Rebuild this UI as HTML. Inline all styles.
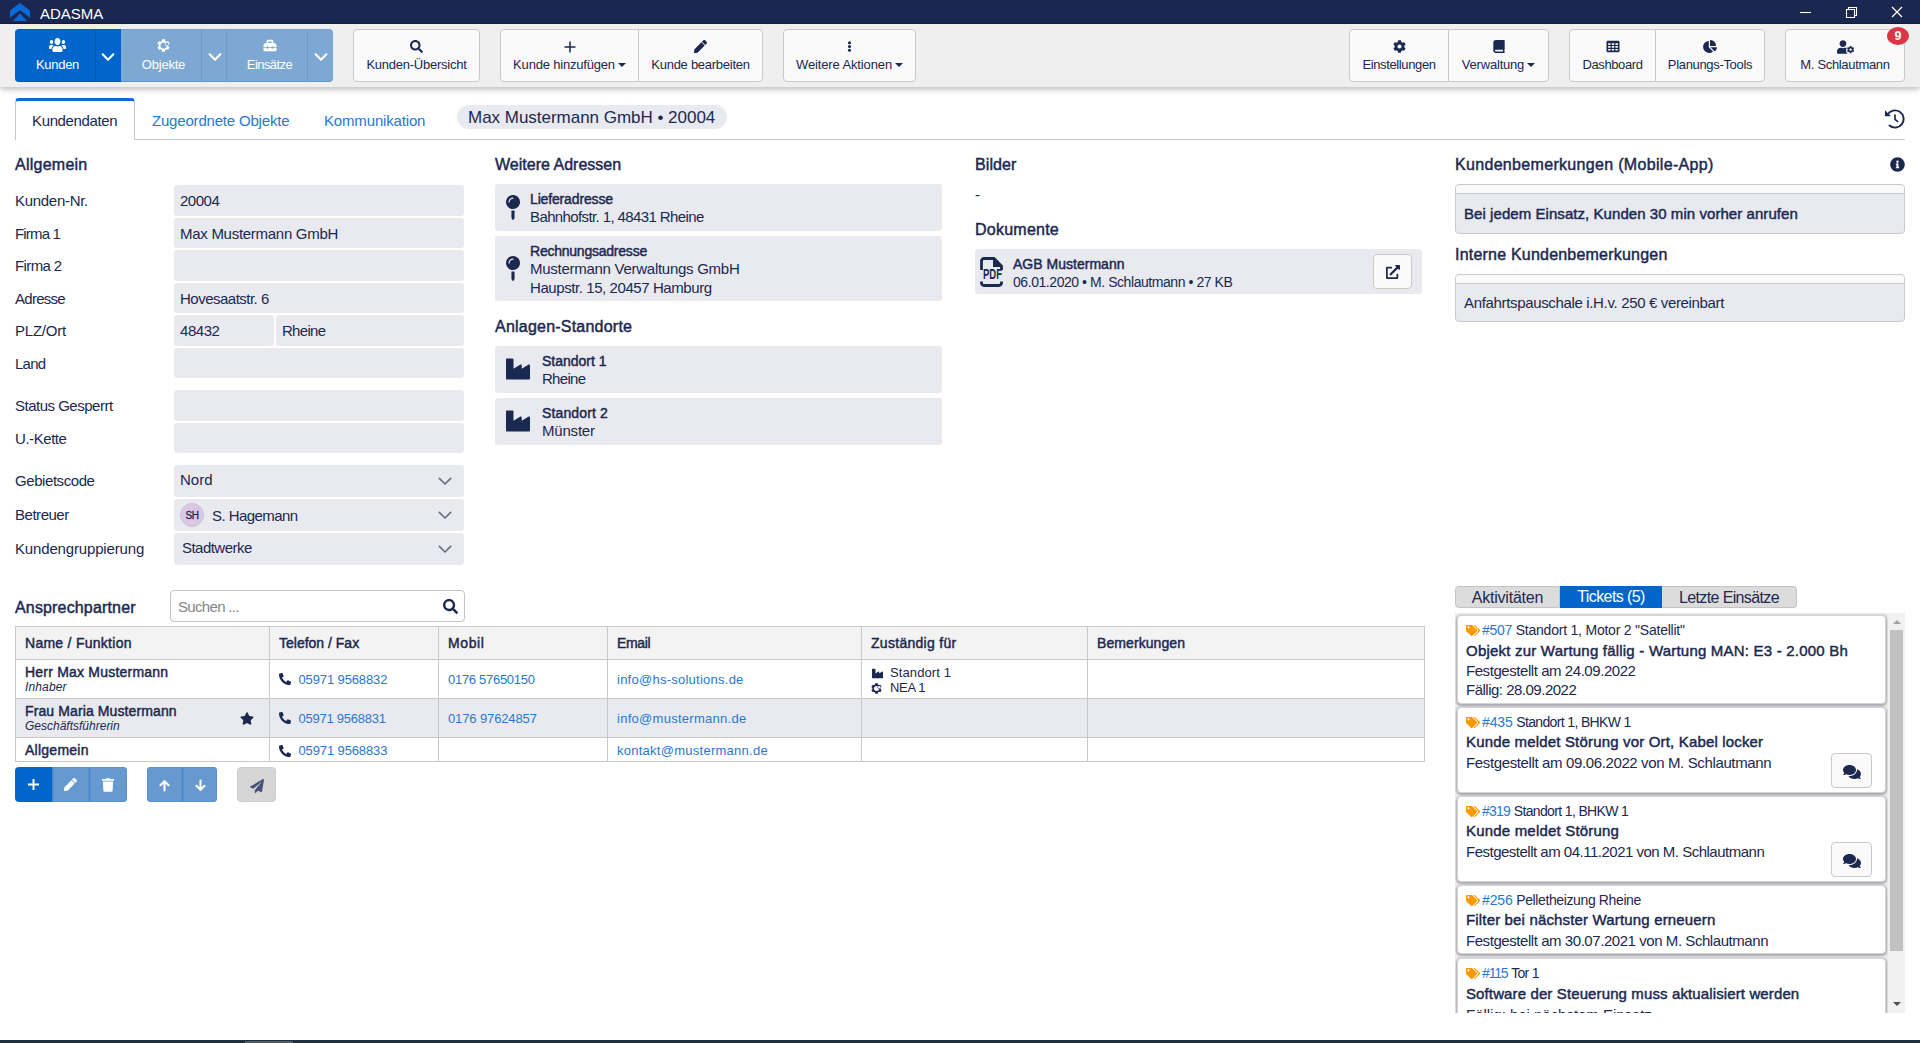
<!DOCTYPE html>
<html lang="de"><head>
<meta charset="utf-8">
<title>ADASMA</title>
<style>
*{box-sizing:border-box;margin:0;padding:0}
html,body{width:1921px;height:1043px;overflow:hidden;background:#fff}
body{position:relative;font-family:"Liberation Sans",sans-serif;font-size:15px;color:#1b2850;letter-spacing:-0.3px}
.abs{position:absolute}
svg{display:block;fill:currentColor}
.nw{white-space:nowrap}
.b{font-weight:normal;-webkit-text-stroke:0.45px currentColor}
a{color:#2878d0;text-decoration:none}
/* title bar */
#title{left:0;top:0;width:1920px;height:24px;background:#1a2750;border-bottom:1px solid #111c3e}
#title .name{left:40px;top:5px;color:#fff;font-size:15px;letter-spacing:-0.2px}
/* toolbar */
#bar{left:0;top:24px;width:1920px;height:63px;background:#efefef;box-shadow:0 2px 6px rgba(0,0,0,.28)}
.tb{position:absolute;top:5px;height:53px;background:#fafafa;border:1px solid #c9c9c9;color:#1b2850;font-size:13px;text-align:center}
.tb .ic{position:absolute;left:0;right:0;top:9.5px;height:16px}
.tb .ic svg{margin:0 auto}
.tb .lb{position:absolute;left:0;right:0;top:27px;white-space:nowrap}
.nb{position:absolute;top:5px;height:53px;color:#fff;text-align:center;font-size:13px}
.nb.on{background:#0066cc;border-top:1px solid #0060c0;border-bottom:1px solid #0058b2}
.nb.off{background:#7da8d3;border-top:1px solid #76a2cf;border-bottom:1px solid #6496cb}
.nb .ic{position:absolute;left:5px;right:0;top:9px}
.nb .ic svg{margin:0 auto}
.nb .lb{position:absolute;left:5px;right:0;top:27px;white-space:nowrap}
.caret{display:inline-block;width:0;height:0;border-left:4px solid transparent;border-right:4px solid transparent;border-top:4px solid #1b2850;vertical-align:2px;margin-left:3px}
/* content */
.h{position:absolute;font-size:16px;font-weight:normal;-webkit-text-stroke:0.45px currentColor;white-space:nowrap;letter-spacing:-0.45px}
.lab{position:absolute;left:15px;font-size:15px;white-space:nowrap}
.inp{position:absolute;background:#e9eaf0;border-radius:3px;height:30px;font-size:15px;line-height:32px;padding-left:6px;white-space:nowrap}
.card{position:absolute;background:#e9eaf0;border-radius:3px}
.card .t{position:absolute;white-space:nowrap;font-size:15px}

.tab{position:absolute;top:98px;height:42px;font-size:15px;line-height:45px;white-space:nowrap}
.tline{position:absolute;left:15px;top:139px;width:1890px;height:1px;background:#c8c8c8}
.sel svg{position:absolute;right:11px;top:8px;color:#6a6f80}
.nbox{position:absolute;left:1455px;width:450px;border:1px solid #c9cad0;border-radius:4px;background:#e9eaf0;overflow:hidden}
.nbox .top{height:9px;background:#fafafa;border-bottom:1px solid #c9cad0}
.nbox .tx{position:absolute;left:8px;white-space:nowrap;font-size:15px}
table.ap{position:absolute;left:15px;top:626px;width:1410px;border-collapse:collapse;font-size:13px;letter-spacing:-0.1px}
table.ap td,table.ap th{border:1px solid #c8c8c8;padding:0 0 0 9px;text-align:left;vertical-align:middle;white-space:nowrap;position:relative}
table.ap th{background:#f3f3f3;height:33px;font-weight:normal;-webkit-text-stroke:0.45px currentColor;font-size:14px}
table.ap .sub{font-style:italic;font-size:12px;font-weight:normal;-webkit-text-stroke:0;line-height:13px}
table.ap .nm{font-weight:normal;-webkit-text-stroke:0.45px currentColor;line-height:16px;font-size:14px;position:relative;top:-1px}
table.ap tr.hl td{background:#e9eaf0}
table.ap tr.r3 td{padding-top:2px}
table.ap tr.r3 td:first-child{padding-top:0}
table.ap tr.r3 .nm{top:0.500px}
.ph{display:inline-block;vertical-align:-1.500px;margin-right:9px}
.abtn{position:absolute;top:767px;height:35px;color:#fff}
.abtn svg{position:absolute}
.abtn.fd{box-shadow:inset 0 0 0 1px #5a92d2}
.tk{position:absolute;left:2px;width:429px;background:#fff;border:1px solid #d4d4d4;border-radius:4px;box-shadow:0 1px 2px 1px rgba(60,66,82,.38);font-size:15px}
.tk div{position:absolute;left:8px;white-space:nowrap}
.tk .l1{font-size:14px;top:6px;letter-spacing:-0.2px}
.tk .l1 svg{display:inline-block;vertical-align:-2px;color:#ff9800;margin-right:2px}
.tk .l2{font-weight:normal;-webkit-text-stroke:0.45px currentColor;top:26px;letter-spacing:-0.35px}
.tk .l3{top:46px;letter-spacing:-0.45px}
.tk .l4{top:65px;letter-spacing:-0.45px}
.tk .cb{left:373px;width:41px;height:35px;border:1px solid #c9c9c9;border-radius:4px;background:#fafafa}
.rt{position:absolute;top:586px;height:22px;font-size:16px;line-height:22px;text-align:center;white-space:nowrap;letter-spacing:-0.5px}
</style>
</head>
<body>
<!-- ICONS -->
<svg width="0" height="0" style="position:absolute">
<defs>
<symbol id="i-plus" viewBox="0 0 448 512"><path d="M416 208H272V64c0-17.67-14.33-32-32-32h-32c-17.67 0-32 14.33-32 32v144H32c-17.67 0-32 14.33-32 32v32c0 17.67 14.33 32 32 32h144v144c0 17.67 14.33 32 32 32h32c17.67 0 32-14.33 32-32V304h144c17.67 0 32-14.33 32-32v-32c0-17.67-14.33-32-32-32z"></path></symbol>
<symbol id="i-search" viewBox="0 0 512 512"><path d="M505 442.7L405.3 343c-4.5-4.5-10.6-7-17-7H372c27.600-35.3 44-79.7 44-128C416 93.100 322.900 0 208 0S0 93.100 0 208s93.100 208 208 208c48.300 0 92.700-16.400 128-44v16.300c0 6.400 2.500 12.500 7 17l99.700 99.700c9.400 9.400 24.600 9.400 33.900 0l28.300-28.300c9.400-9.400 9.400-24.600.1-34zM208 336c-70.700 0-128-57.200-128-128 0-70.700 57.200-128 128-128 70.700 0 128 57.200 128 128 0 70.700-57.200 128-128 128z"></path></symbol>
<symbol id="i-pen" viewBox="0 0 512 512"><path d="M290.740 93.240l128.020 128.020-277.990 277.990-114.140 12.600C11.350 513.540-1.560 500.620.14 485.340l12.700-114.220 277.900-277.880zm207.200-19.060l-60.110-60.110c-18.750-18.750-49.160-18.750-67.910 0l-56.550 56.550 128.020 128.020 56.550-56.550c18.750-18.760 18.750-49.160 0-67.910z"></path></symbol>
<symbol id="i-dots" viewBox="0 0 192 512"><circle cx="96" cy="80" r="72"></circle><circle cx="96" cy="256" r="72"></circle><circle cx="96" cy="432" r="72"></circle></symbol>
<symbol id="i-cog" viewBox="0 0 512 512"><path d="M487.400 315.700l-42.600-24.600c4.300-23.200 4.300-47 0-70.200l42.600-24.600c4.900-2.800 7.100-8.600 5.500-14-11.100-35.600-30-67.800-54.700-94.600-3.800-4.100-10-5.100-14.800-2.300L380.800 110c-17.900-15.400-38.500-27.300-60.800-35.100V25.800c0-5.600-3.900-10.500-9.400-11.700-36.700-8.200-74.300-7.800-109.200 0-5.500 1.200-9.400 6.100-9.400 11.700V75c-22.200 7.900-42.800 19.800-60.800 35.100L88.700 85.500c-4.900-2.800-11-1.900-14.800 2.300-24.700 26.700-43.600 58.900-54.700 94.600-1.700 5.400.6 11.200 5.500 14L67.300 221c-4.300 23.200-4.300 47 0 70.200l-42.600 24.600c-4.900 2.800-7.100 8.600-5.500 14 11.100 35.600 30 67.800 54.700 94.600 3.800 4.100 10 5.100 14.800 2.300l42.600-24.600c17.900 15.400 38.500 27.300 60.800 35.100v49.200c0 5.600 3.900 10.500 9.400 11.700 36.700 8.200 74.300 7.800 109.200 0 5.500-1.200 9.400-6.100 9.400-11.700v-49.200c22.200-7.900 42.800-19.800 60.800-35.100l42.600 24.600c4.900 2.800 11 1.900 14.800-2.300 24.700-26.700 43.600-58.900 54.700-94.600 1.500-5.500-.7-11.300-5.600-14.100zM256 336c-44.100 0-80-35.900-80-80s35.900-80 80-80 80 35.900 80 80-35.900 80-80 80z"></path></symbol>
<symbol id="i-users" viewBox="0 0 640 512" preserveAspectRatio="none"><path d="M96 224c35.300 0 64-28.700 64-64s-28.700-64-64-64-64 28.700-64 64 28.700 64 64 64zm448 0c35.300 0 64-28.700 64-64s-28.700-64-64-64-64 28.700-64 64 28.700 64 64 64zm32 32h-64c-17.600 0-33.500 7.100-45.100 18.600 40.300 22.100 68.900 62 75.100 109.400h66c17.700 0 32-14.300 32-32v-32c0-35.300-28.700-64-64-64zm-256 0c61.900 0 112-50.100 112-112S381.900 32 320 32 208 82.100 208 144s50.100 112 112 112zm76.800 32h-8.300c-20.800 10-43.900 16-68.500 16s-47.600-6-68.500-16h-8.300C179.600 288 128 339.600 128 403.200V432c0 26.500 21.500 48 48 48h288c26.500 0 48-21.500 48-48v-28.800c0-63.600-51.600-115.200-115.200-115.200zm-223.700-13.400C161.500 263.100 145.600 256 128 256H64c-35.300 0-64 28.700-64 64v32c0 17.700 14.300 32 32 32h65.900c6.300-47.400 34.900-87.300 75.200-109.400z"></path></symbol>
<symbol id="i-toolbox" viewBox="0 0 512 512"><path d="M502.630 214.630l-45.250-45.250c-6-6-14.140-9.370-22.630-9.370H384V80c0-26.510-21.490-48-48-48H176c-26.510 0-48 21.490-48 48v80H77.250c-8.490 0-16.620 3.370-22.630 9.370L9.370 214.630c-6 6-9.370 14.140-9.370 22.630V320h128v-16c0-8.840 7.160-16 16-16h32c8.840 0 16 7.160 16 16v16h128v-16c0-8.840 7.160-16 16-16h32c8.840 0 16 7.160 16 16v16h128v-82.750c0-8.480-3.370-16.620-9.370-22.620zM320 160H192V96h128v64zm64 208c0 8.840-7.160 16-16 16h-32c-8.840 0-16-7.160-16-16v-16H192v16c0 8.840-7.160 16-16 16h-32c-8.840 0-16-7.160-16-16v-16H0v96c0 17.670 14.330 32 32 32h448c17.670 0 32-14.330 32-32v-96H384v16z"></path></symbol>
<symbol id="i-book" viewBox="0 0 448 512"><path d="M448 360V24c0-13.300-10.700-24-24-24H96C43 0 0 43 0 96v320c0 53 43 96 96 96h328c13.300 0 24-10.700 24-24v-16c0-7.500-3.500-14.300-8.900-18.700-4.200-15.400-4.200-59.300 0-74.700 5.400-4.300 8.900-11.100 8.900-18.600zM381.400 448H96c-17.700 0-32-14.300-32-32s14.300-32 32-32h285.400c-1.900 17.100-1.900 46.900 0 64z"></path></symbol>
<symbol id="i-table" viewBox="0 0 512 512"><path d="M48 32h416a48 48 0 0 1 48 48v352a48 48 0 0 1-48 48H48a48 48 0 0 1-48-48V80a48 48 0 0 1 48-48zm16 96v64h96v-64zm144 0v64h96v-64zm144 0v64h96v-64zM64 240v64h96v-64zm144 0v64h96v-64zm144 0v64h96v-64zM64 352v64h96v-64zm144 0v64h96v-64zm144 0v64h96v-64z" fill-rule="evenodd"></path></symbol>
<symbol id="i-pie" viewBox="0 0 544 512"><path d="M527.790 288H290.500l158.030 158.030c6.040 6.040 15.980 6.530 22.190.68 38.700-36.460 65.320-85.610 73.130-140.860 1.340-9.460-6.510-17.850-16.060-17.850zm-15.830-64.800C503.720 103.740 408.260 8.280 288.800.04 279.680-.59 272 7.100 272 16.240V240h223.770c9.140 0 16.820-7.680 16.190-16.800zM224 288V50.710c0-9.550-8.390-17.400-17.840-16.060C86.990 51.490-4.100 155.600.14 280.370 4.500 408.510 114.830 513.590 243.030 511.980c50.400-.63 96.970-16.870 135.260-44.030 7.900-5.600 8.420-17.230 1.570-24.080L224 288z"></path></symbol>
<symbol id="i-usercog" viewBox="0 0 640 512"><path d="M224 256c70.700 0 128-57.300 128-128S294.700 0 224 0 96 57.300 96 128s57.300 128 128 128zm89.600 32h-16.700c-22.200 10.200-46.900 16-72.900 16s-50.600-5.800-72.900-16h-16.700C60.200 288 0 348.200 0 422.400V464c0 26.500 21.500 48 48 48h360c-40-28-66-76-66-126 0-34 10-62 30-88-8-3-30-10-58.400-10z"></path><g transform="translate(368 212) scale(.56)"><path d="M487.400 315.700l-42.600-24.600c4.300-23.200 4.300-47 0-70.200l42.600-24.600c4.900-2.800 7.100-8.600 5.500-14-11.100-35.600-30-67.800-54.700-94.600-3.800-4.100-10-5.100-14.800-2.300L380.800 110c-17.900-15.400-38.500-27.300-60.800-35.100V25.800c0-5.600-3.900-10.500-9.400-11.700-36.700-8.200-74.300-7.800-109.200 0-5.500 1.200-9.400 6.100-9.400 11.700V75c-22.200 7.900-42.800 19.800-60.800 35.100L88.700 85.500c-4.900-2.800-11-1.900-14.800 2.300-24.700 26.700-43.600 58.900-54.700 94.600-1.700 5.400.6 11.200 5.500 14L67.300 221c-4.300 23.200-4.300 47 0 70.200l-42.600 24.600c-4.900 2.800-7.100 8.600-5.500 14 11.100 35.600 30 67.800 54.700 94.600 3.800 4.100 10 5.100 14.800 2.300l42.600-24.600c17.900 15.400 38.500 27.300 60.800 35.100v49.200c0 5.600 3.900 10.500 9.400 11.700 36.700 8.200 74.300 7.800 109.200 0 5.500-1.200 9.400-6.100 9.400-11.700v-49.200c22.200-7.900 42.800-19.800 60.800-35.100l42.600 24.600c4.900 2.800 11 1.900 14.800-2.300 24.700-26.700 43.600-58.900 54.700-94.600 1.500-5.500-.7-11.300-5.600-14.100zM256 336c-44.100 0-80-35.900-80-80s35.900-80 80-80 80 35.900 80 80-35.900 80-80 80z"></path></g></symbol>
<symbol id="i-objcog" viewBox="0 0 512 512"><path fill-rule="evenodd" d="M487.400 315.700l-42.600-24.600c4.300-23.200 4.300-47 0-70.200l42.600-24.600c4.900-2.800 7.100-8.600 5.500-14-11.100-35.600-30-67.800-54.700-94.600-3.800-4.100-10-5.100-14.800-2.300L380.800 110c-17.900-15.400-38.500-27.300-60.800-35.100V25.800c0-5.600-3.900-10.500-9.400-11.700-36.700-8.200-74.300-7.800-109.200 0-5.500 1.200-9.400 6.100-9.400 11.700V75c-22.200 7.900-42.800 19.800-60.800 35.100L88.700 85.500c-4.900-2.800-11-1.900-14.800 2.300-24.700 26.700-43.600 58.900-54.700 94.600-1.700 5.400.6 11.200 5.500 14L67.300 221c-4.300 23.200-4.300 47 0 70.200l-42.600 24.600c-4.900 2.800-7.100 8.600-5.500 14 11.100 35.600 30 67.800 54.700 94.600 3.800 4.100 10 5.100 14.800 2.300l42.600-24.600c17.900 15.400 38.500 27.300 60.800 35.100v49.200c0 5.600 3.900 10.500 9.400 11.700 36.700 8.200 74.300 7.800 109.200 0 5.500-1.200 9.400-6.100 9.400-11.700v-49.200c22.200-7.900 42.800-19.800 60.800-35.100l42.600 24.600c4.900 2.800 11 1.900 14.800-2.300 24.700-26.700 43.600-58.900 54.700-94.600 1.500-5.500-.7-11.300-5.600-14.100zM256 376c-66 0-120-54-120-120s54-120 120-120c22 0 43 6 61 17-9 14-14 30-14 47 0 47 38 85 85 85-18 53-69 91-132 91zM388 140a60 60 0 1 1 0 120 60 60 0 0 1 0-120z"></path></symbol>
<symbol id="i-history" viewBox="0 0 512 512"><path d="M504 255.531c.253 136.640-111.180 248.372-247.820 248.468-59.015.042-113.223-20.530-155.822-54.911-11.077-8.940-11.905-25.541-1.839-35.607l11.267-11.267c8.609-8.609 22.353-9.551 31.891-1.984C173.062 425.135 212.781 440 256 440c101.705 0 184-82.311 184-184 0-101.705-82.311-184-184-184-48.814 0-93.149 18.969-126.068 49.932l50.754 50.754c10.080 10.080 2.941 27.314-11.313 27.314H24c-8.837 0-16-7.163-16-16V38.627c0-14.254 17.234-21.393 27.314-11.314l49.372 49.372C129.209 34.136 189.552 8 256 8c136.810 0 247.747 110.780 248 247.531zm-180.912 78.784l9.823-12.630c8.138-10.463 6.253-25.542-4.210-33.679L288 256.349V152c0-13.255-10.745-24-24-24h-16c-13.255 0-24 10.745-24 24v135.651l65.409 50.874c10.463 8.137 25.541 6.253 33.679-4.210z"></path></symbol>
<symbol id="i-info" viewBox="0 0 512 512"><path d="M256 8C119.043 8 8 119.083 8 256c0 136.997 111.043 248 248 248s248-111.003 248-248C504 119.083 392.957 8 256 8zm0 110c23.196 0 42 18.804 42 42s-18.804 42-42 42-42-18.804-42-42 18.804-42 42-42zm56 254c0 6.627-5.373 12-12 12h-88c-6.627 0-12-5.373-12-12v-24c0-6.627 5.373-12 12-12h12v-64h-12c-6.627 0-12-5.373-12-12v-24c0-6.627 5.373-12 12-12h64c6.627 0 12 5.373 12 12v100h12c6.627 0 12 5.373 12 12v24z"></path></symbol>
<symbol id="i-pin" viewBox="0 0 288 512"><path d="M112 316.940v156.690l22.020 33.020c4.750 7.120 15.220 7.120 19.970 0L176 473.630V316.940c-10.390 1.920-21.060 3.060-32 3.060s-21.610-1.140-32-3.060zM144 0C64.470 0 0 64.470 0 144s64.470 144 144 144 144-64.470 144-144S223.530 0 144 0zm0 76c-37.500 0-68 30.500-68 68 0 6.620-5.380 12-12 12s-12-5.380-12-12c0-50.730 41.280-92 92-92 6.620 0 12 5.380 12 12s-5.380 12-12 12z"></path></symbol>
<symbol id="i-industry" viewBox="0 0 512 512"><path d="M475.115 163.781L336 252.309v-68.280c0-18.916-20.931-30.399-36.885-20.248L160 252.309V56c0-13.255-10.745-24-24-24H24C10.745 32 0 42.745 0 56v400c0 13.255 10.745 24 24 24h464c13.255 0 24-10.745 24-24V184.029c0-18.917-20.931-30.399-36.885-20.248z"></path></symbol>
<symbol id="i-ext" viewBox="0 0 512 512"><path d="M432 320h-32a16 16 0 0 0-16 16v112H64V128h144a16 16 0 0 0 16-16V80a16 16 0 0 0-16-16H48a48 48 0 0 0-48 48v352a48 48 0 0 0 48 48h352a48 48 0 0 0 48-48V336a16 16 0 0 0-16-16zM488 0H360c-21.370 0-32.050 25.910-17 41l35.730 35.730L135 320.370a24 24 0 0 0 0 34L157.670 377a24 24 0 0 0 34 0l243.610-243.680L471 169c15 15 41 4.500 41-17V24a24 24 0 0 0-24-24z"></path></symbol>
<symbol id="i-phone" viewBox="0 0 512 512"><path d="M493.400 24.600l-104-24c-11.300-2.600-22.900 3.300-27.500 13.900l-48 112c-4.200 9.800-1.400 21.300 6.900 28l60.600 49.600c-36 76.700-98.900 140.500-177.200 177.200l-49.600-60.600c-6.800-8.300-18.200-11.100-28-6.900l-112 48C3.900 366.500-2 378.100.6 389.400l24 104C27.100 504.200 36.700 512 48 512c256.100 0 464-207.500 464-464 0-11.200-7.700-20.900-18.600-23.400z" transform="matrix(-1 0 0 1 512 0)"></path></symbol>
<symbol id="i-star" viewBox="0 0 576 512"><path d="M259.300 17.800L194 150.200 47.900 171.500c-26.200 3.800-36.700 36.100-17.700 54.600l105.700 103-25 145.500c-4.500 26.300 23.200 46 46.400 33.700L288 439.600l130.700 68.700c23.200 12.200 50.900-7.400 46.400-33.700l-25-145.500 105.700-103c19-18.500 8.500-50.800-17.700-54.600L382 150.200 316.700 17.800c-11.700-23.600-45.600-23.900-57.400 0z"></path></symbol>
<symbol id="i-trash" viewBox="0 0 448 512"><path d="M432 32H312l-9.400-18.700A24 24 0 0 0 281.100 0H166.800a23.720 23.720 0 0 0-21.400 13.300L136 32H16A16 16 0 0 0 0 48v32a16 16 0 0 0 16 16h416a16 16 0 0 0 16-16V48a16 16 0 0 0-16-16zM53.200 467a48 48 0 0 0 47.900 45h245.800a48 48 0 0 0 47.900-45L416 128H32z"></path></symbol>
<symbol id="i-up" viewBox="0 0 24 24"><path d="M12 20V5M5.500 11.500L12 5l6.500 6.500" fill="none" stroke="currentColor" stroke-width="3.300" stroke-linecap="round" stroke-linejoin="round"></path></symbol>
<symbol id="i-down" viewBox="0 0 24 24"><path d="M12 4v15M5.500 12.500L12 19l6.500-6.500" fill="none" stroke="currentColor" stroke-width="3.300" stroke-linecap="round" stroke-linejoin="round"></path></symbol>
<symbol id="i-plane" viewBox="0 0 512 512"><path d="M476 3.200L12.500 270.600c-18.100 10.400-15.800 35.600 2.200 43.200L121 358.400l287.300-253.200c5.500-4.900 13.300 2.600 8.600 8.300L176 407v80.500c0 23.600 28.500 32.900 42.500 15.800L282 426l124.600 52.200c14.200 6 30.400-2.900 33-18.200l72-432C515 7.800 493.300-6.800 476 3.200z"></path></symbol>
<symbol id="i-tags" viewBox="0 0 640 512"><path d="M497.941 225.941L286.059 14.059A48 48 0 0 0 252.118 0H48C21.490 0 0 21.490 0 48v204.118a48 48 0 0 0 14.059 33.941l211.882 211.882c18.744 18.745 49.136 18.746 67.882 0l204.118-204.118c18.745-18.745 18.745-49.137 0-67.882zM112 160c-26.510 0-48-21.490-48-48s21.490-48 48-48 48 21.490 48 48-21.490 48-48 48zm513.941 133.823L421.823 497.941c-18.745 18.745-49.137 18.745-67.882 0l-.36-.36L527.640 323.522c16.999-16.999 26.360-39.600 26.360-63.640s-9.362-46.641-26.360-63.640L331.397 0h48.721a48 48 0 0 1 33.941 14.059l211.882 211.882c18.745 18.745 18.745 49.137 0 67.882z"></path></symbol>
<symbol id="i-comments" viewBox="0 0 576 512"><path d="M416 192c0-88.400-93.100-160-208-160S0 103.600 0 192c0 34.300 14.100 65.900 38 92-13.400 30.200-35.500 54.200-35.800 54.500-2.200 2.300-2.800 5.700-1.500 8.700S4.800 352 8 352c36.600 0 66.900-12.300 88.700-25 32.200 15.700 70.300 25 111.300 25 114.900 0 208-71.600 208-160zm122 220c23.900-26 38-57.700 38-92 0-66.900-53.500-124.200-129.300-148.100.9 6.600 1.300 13.300 1.300 20.100 0 105.900-107.700 192-240 192-10.800 0-21.300-.8-31.700-1.900C207.800 439.600 281.800 480 368 480c41 0 79.100-9.200 111.300-25 21.800 12.700 52.100 25 88.700 25 3.200 0 6.100-1.900 7.300-4.800 1.300-2.900.7-6.300-1.500-8.700-.3-.3-22.400-24.200-35.800-54.500z"></path></symbol>
<symbol id="i-pdf" viewBox="0 0 23 30"><path d="M1.500 13V4a2.500 2.500 0 0 1 2.500-2.500H14l7.500 7.500V13M1.500 24.500V26a2.500 2.500 0 0 0 2.500 2.500h15a2.500 2.500 0 0 0 2.500-2.500v-1.500" fill="none" stroke="currentColor" stroke-width="2.800"></path><path d="M13 1V10h9.500z"></path></symbol>
<symbol id="i-plus2" viewBox="0 0 12 12"><path d="M6 .5v11M.5 6h11" fill="none" stroke="currentColor" stroke-width="1.500"></path></symbol>
<symbol id="i-hist2" viewBox="0 0 20 20"><path d="M2.550 5.700A8.600 8.600 0 1 1 4.470 16.590" fill="none" stroke="currentColor" stroke-width="1.900" stroke-linecap="round"></path><path d="M0 1.200V7.300H5.900z"></path><path d="M10 5.600v4.800l3 2.500" fill="none" stroke="currentColor" stroke-width="1.700"></path></symbol>
<symbol id="i-plus3" viewBox="0 0 11 11"><path d="M5.500 0v11M0 5.500h11" fill="none" stroke="currentColor" stroke-width="1.900"></path></symbol>
<symbol id="i-chev2" viewBox="0 0 24 24"><path d="M3.500 8l8.500 8.500L20.500 8" fill="none" stroke="currentColor" stroke-width="2.5" stroke-linecap="round" stroke-linejoin="round"></path></symbol>
<symbol id="i-chev" viewBox="0 0 24 24"><path d="M4 8l8 8 8-8" fill="none" stroke="currentColor" stroke-width="3.2" stroke-linecap="round" stroke-linejoin="round"></path></symbol>
</defs>
</svg>

<!-- TITLE BAR -->
<div id="title" class="abs">
  <svg class="abs" style="left:10px;top:3px" width="20" height="18" viewBox="0 0 20 18"><path d="M10 0l10 7.500v7.200L10 7.300 0 14.700V7.500z" fill="#0a6ad6"></path><path d="M10 10.500l7.200 7.500H2.800z" fill="#0a6ad6"></path></svg>
  <div class="abs name nw"><span style="letter-spacing: -0.01px;">ADASMA</span></div>
  <svg class="abs" style="left:1799px;top:5px" width="110" height="14" viewBox="0 0 110 14" fill="none" stroke="#fff" stroke-width="1.1"><path d="M1 7.500h11"></path><path d="M47.500 4.500h8v8h-8zM49.500 4.500v-2h8v8h-2"></path><path d="M93 2l10 10M103 2l-10 10" stroke-width="1.3"></path></svg>
</div>

<!-- TOOLBAR -->
<div id="bar" class="abs">
<div class="nb on" style="left:15px;width:80px;border-radius:4px 0 0 4px;"><div class="ic"><svg width="17" height="16" style="margin-top:-2px"><use href="#i-users"></use></svg></div><div class="lb"><span style="letter-spacing: -0.3px;">Kunden</span></div></div>
<div class="nb on" style="left:95px;width:26px;border-left:1px solid #0558ad;"><svg class="abs" style="left:4px;top:19px" width="16" height="16"><use href="#i-chev"></use></svg></div>
<div class="nb off" style="left:121px;width:80px;"><div class="ic"><svg width="13" height="13"><use href="#i-objcog"></use></svg></div><div class="lb"><span style="letter-spacing: -0.22px;">Objekte</span></div></div>
<div class="nb off" style="left:201px;width:25px;border-left:1px solid #6f9bc8;"><svg class="abs" style="left:5px;top:19px" width="16" height="16"><use href="#i-chev"></use></svg></div>
<div class="nb off" style="left:226px;width:81px;border-left:1px solid #6f9bc8;"><div class="ic"><svg width="14" height="13"><use href="#i-toolbox"></use></svg></div><div class="lb"><span style="letter-spacing: -0.57px;">Einsätze</span></div></div>
<div class="nb off" style="left:307px;width:26px;border-left:1px solid #6f9bc8;border-radius:0 4px 4px 0;"><svg class="abs" style="left:5px;top:19px" width="16" height="16"><use href="#i-chev"></use></svg></div>
<div class="tb" style="left:353px;width:127px;border-radius:4px;"><div class="ic"><svg width="13" height="13"><use href="#i-search"></use></svg></div><div class="lb"><span style="letter-spacing: -0.24px;">Kunden-Übersicht</span></div></div>
<div class="tb" style="left:500px;width:139px;border-radius:4px 0 0 4px;"><div class="ic"><svg width="12" height="12" style="margin-top:1px"><use href="#i-plus2"></use></svg></div><div class="lb"><span style="letter-spacing: -0.19px;">Kunde hinzufügen</span><span class="caret"></span></div></div>
<div class="tb" style="left:638px;width:125px;border-radius:0 4px 4px 0;"><div class="ic"><svg width="13" height="13"><use href="#i-pen"></use></svg></div><div class="lb"><span style="letter-spacing: -0.27px;">Kunde bearbeiten</span></div></div>
<div class="tb" style="left:783px;width:133px;border-radius:4px;"><div class="ic"><svg width="5" height="11" style="margin-top:1px"><use href="#i-dots"></use></svg></div><div class="lb"><span style="letter-spacing: -0.13px;">Weitere Aktionen</span><span class="caret"></span></div></div>
<div class="tb" style="left:1349px;width:100px;border-radius:4px 0 0 4px;"><div class="ic"><svg width="13" height="13"><use href="#i-cog"></use></svg></div><div class="lb"><span style="letter-spacing: -0.37px;">Einstellungen</span></div></div>
<div class="tb" style="left:1448px;width:101px;border-radius:0 4px 4px 0;"><div class="ic"><svg width="12" height="13"><use href="#i-book"></use></svg></div><div class="lb"><span style="letter-spacing: -0.2px;">Verwaltung</span><span class="caret"></span></div></div>
<div class="tb" style="left:1569px;width:87px;border-radius:4px 0 0 4px;"><div class="ic"><svg width="14" height="13"><use href="#i-table"></use></svg></div><div class="lb"><span style="letter-spacing: -0.4px;">Dashboard</span></div></div>
<div class="tb" style="left:1655px;width:110px;border-radius:0 4px 4px 0;"><div class="ic"><svg width="14" height="13"><use href="#i-pie"></use></svg></div><div class="lb"><span style="letter-spacing: -0.33px;">Planungs-Tools</span></div></div>
<div class="tb" style="left:1785px;width:120px;border-radius:4px;"><div class="ic"><svg width="17" height="14"><use href="#i-usercog"></use></svg></div><div class="lb"><span style="letter-spacing: -0.33px;">M. Schlautmann</span></div></div>
<div class="abs" style="left:1887px;top:3px;width:22px;height:18px;border-radius:11px/9px;background:#dc3545;color:#fff;font-size:12.500px;font-weight:bold;text-align:center;line-height:18px;letter-spacing:0"><span style="letter-spacing: 0.05px;">9</span></div>
</div>

<!-- MAIN -->
<div id="main">
<div class="tab" style="left:15px;width:120px;border:1px solid #c8c8c8;border-bottom:none;border-top:3px solid #0a6ad6;border-radius:4px 4px 0 0;background:#fff;padding-left:16px;line-height:40px;z-index:2"><span style="letter-spacing: -0.36px;">Kundendaten</span></div>
<div class="tab" style="left:152px"><a><span style="letter-spacing: -0.19px;">Zugeordnete Objekte</span></a></div>
<div class="tab" style="left:324px"><a><span style="letter-spacing: -0.16px;">Kommunikation</span></a></div>
<div class="abs nw" style="left:457px;top:105px;width:270px;height:24px;border-radius:12px;background:#e9eaf0;font-size:17px;line-height:25px;padding-left:11px;letter-spacing:-0.3px"><span style="letter-spacing: -0.02px;">Max Mustermann GmbH • 20004</span></div>
<div class="tline"></div>
<svg class="abs" style="left:1885px;top:108.500px" width="20" height="20"><use href="#i-hist2"></use></svg>
<div class="h" style="left:15px;top:156px"><span style="letter-spacing: 0.25px;">Allgemein</span></div>
<div class="lab" style="top:192px"><span style="letter-spacing: -0.29px;">Kunden-Nr.</span></div><div class="inp" style="left:174px;top:185px;width:290px;height:31px"><span style="letter-spacing: -0.49px;">20004</span></div>
<div class="lab" style="top:225px"><span style="letter-spacing: -0.83px;">Firma 1</span></div><div class="inp" style="left:174px;top:218px;width:290px"><span style="letter-spacing: -0.28px;">Max Mustermann GmbH</span></div>
<div class="lab" style="top:257px"><span style="letter-spacing: -0.62px;">Firma 2</span></div><div class="inp" style="left:174px;top:250px;width:290px;height:31px"></div>
<div class="lab" style="top:290px"><span style="letter-spacing: -0.72px;">Adresse</span></div><div class="inp" style="left:174px;top:283px;width:290px"><span style="letter-spacing: -0.51px;">Hovesaatstr. 6</span></div>
<div class="lab" style="top:322px"><span style="letter-spacing: -0.22px;">PLZ/Ort</span></div><div class="inp" style="left:174px;top:315px;width:100px;height:31px"><span style="letter-spacing: -0.44px;">48432</span></div><div class="inp" style="left:276px;top:315px;width:188px;height:31px"><span style="letter-spacing: -0.71px;">Rheine</span></div>
<div class="lab" style="top:355px"><span style="letter-spacing: -0.72px;">Land</span></div><div class="inp" style="left:174px;top:348px;width:290px"></div>
<div class="lab" style="top:397px"><span style="letter-spacing: -0.5px;">Status Gesperrt</span></div><div class="inp" style="left:174px;top:390px;width:290px;height:31px"></div>
<div class="lab" style="top:430px"><span style="letter-spacing: -0.44px;">U.-Kette</span></div><div class="inp" style="left:174px;top:423px;width:290px"></div>
<div class="lab" style="top:472px"><span style="letter-spacing: -0.43px;">Gebietscode</span></div><div class="inp sel" style="left:174px;top:465px;width:290px;height:32px;line-height:30px"><span style="letter-spacing: 0px;">Nord</span><svg width="16" height="16"><use href="#i-chev2"></use></svg></div>
<div class="lab" style="top:506px"><span style="letter-spacing: -0.47px;">Betreuer</span></div><div class="inp sel" style="left:174px;top:499px;width:290px;height:32px;line-height:33px"><span class="abs" style="left:6px;top:4px;width:24px;height:24px;border-radius:12px;background:#dcc6e6;border:1px solid #c9c6cc;font-size:10px;-webkit-text-stroke:0.3px currentColor;line-height:23.5px;text-align:center;letter-spacing:0"><span style="letter-spacing: -0.45px;">SH</span></span><span style="margin-left:32px"><span style="letter-spacing: -0.57px;">S. Hagemann</span></span><svg width="16" height="16"><use href="#i-chev2"></use></svg></div>
<div class="lab" style="top:540px"><span style="letter-spacing: -0.16px;">Kundengruppierung</span></div><div class="inp sel" style="left:174px;top:533px;width:290px;height:32px;line-height:30px;padding-left:8px"><span style="letter-spacing: -0.53px;">Stadtwerke</span><svg width="16" height="16"><use href="#i-chev2"></use></svg></div>
<div class="h" style="left:495px;top:156px"><span style="letter-spacing: 0.01px;">Weitere Adressen</span></div>
<div class="card" style="left:495px;top:184px;width:447px;height:47px"><svg class="abs" style="left:11px;top:11px" width="14" height="25"><use href="#i-pin"></use></svg><div class="t b" style="left:35px;top:7px;font-size:14px"><span style="letter-spacing: -0.15px;">Lieferadresse</span></div><div class="t" style="left:35px;top:24px"><span style="letter-spacing: -0.61px;">Bahnhofstr. 1, 48431 Rheine</span></div></div>
<div class="card" style="left:495px;top:236px;width:447px;height:65px"><svg class="abs" style="left:11px;top:20px" width="14" height="25"><use href="#i-pin"></use></svg><div class="t b" style="left:35px;top:7px;font-size:14px"><span style="letter-spacing: -0.23px;">Rechnungsadresse</span></div><div class="t" style="left:35px;top:24px"><span style="letter-spacing: -0.27px;">Mustermann Verwaltungs GmbH</span></div><div class="t" style="left:35px;top:43px"><span style="letter-spacing: -0.42px;">Haupstr. 15, 20457 Hamburg</span></div></div>
<div class="h" style="left:495px;top:318px"><span style="letter-spacing: 0.22px;">Anlagen-Standorte</span></div>
<div class="card" style="left:495px;top:346px;width:447px;height:47px"><svg class="abs" style="left:26px;top:11px;left:11px" width="24" height="24"><use href="#i-industry"></use></svg><div class="t b" style="left:47px;top:7px;font-size:14px"><span style="letter-spacing: -0.01px;">Standort 1</span></div><div class="t" style="left:47px;top:24px"><span style="letter-spacing: -0.71px;">Rheine</span></div></div>
<div class="card" style="left:495px;top:398px;width:447px;height:47px"><svg class="abs" style="left:26px;top:11px;left:11px" width="24" height="24"><use href="#i-industry"></use></svg><div class="t b" style="left:47px;top:7px;font-size:14px"><span style="letter-spacing: 0.14px;">Standort 2</span></div><div class="t" style="left:47px;top:24px"><span style="letter-spacing: -0.2px;">Münster</span></div></div>
<div class="h" style="left:975px;top:156px"><span style="letter-spacing: 0.1px;">Bilder</span></div>
<div class="abs" style="left:975px;top:186px"><span style="letter-spacing: -0.5px;">-</span></div>
<div class="h" style="left:975px;top:221px"><span style="letter-spacing: 0.24px;">Dokumente</span></div>
<div class="card" style="left:975px;top:249px;width:447px;height:45px"><svg class="abs" style="left:5px;top:8px" width="23" height="30"><use href="#i-pdf"></use></svg><div class="abs" style="left:7.500px;top:18px;font-size:14px;line-height:14px;font-weight:bold;letter-spacing:0;transform:scaleX(.68);transform-origin:0 0">PDF</div><div class="t b" style="left:38px;top:7px;font-size:14px"><span style="letter-spacing: 0.02px;">AGB Mustermann</span></div><div class="t" style="left:38px;top:25px;font-size:14px"><span style="letter-spacing: -0.44px;">06.01.2020 • M. Schlautmann • 27 KB</span></div><div class="abs" style="left:398px;top:5px;width:39px;height:35px;border:1px solid #c9c9c9;border-radius:4px;background:#fafafa"><svg class="abs" style="left:12px;top:10px" width="14" height="14"><use href="#i-ext"></use></svg></div></div>
<div class="h" style="left:1455px;top:156px"><span style="letter-spacing: 0.32px;">Kundenbemerkungen (Mobile-App)</span></div>
<svg class="abs" style="left:1890px;top:157px" width="15" height="15"><use href="#i-info"></use></svg>
<div class="nbox" style="top:184px;height:50px"><div class="top"></div><div class="tx b" style="top:20px"><span style="letter-spacing: 0.06px;">Bei jedem Einsatz, Kunden 30 min vorher anrufen</span></div></div>
<div class="h" style="left:1455px;top:246px"><span style="letter-spacing: 0.21px;">Interne Kundenbemerkungen</span></div>
<div class="nbox" style="top:274px;height:48px"><div class="top"></div><div class="tx" style="top:19px"><span style="letter-spacing: -0.34px;">Anfahrtspauschale i.H.v. 250 € vereinbart</span></div></div>
<div class="h" style="left:15px;top:599px"><span style="letter-spacing: 0.16px;">Ansprechpartner</span></div>
<div class="abs" style="left:170px;top:590px;width:295px;height:32px;border:1px solid #c4c4c4;border-radius:4px;background:#fff;font-size:15px;line-height:31px;padding-left:7px;color:#868686"><span style="letter-spacing: -0.68px;">Suchen ...</span><svg class="abs" style="left:272px;top:8px;color:#1b2850" width="15" height="15"><use href="#i-search"></use></svg></div>
<table class="ap"><colgroup><col style="width:254px"><col style="width:169px"><col style="width:169px"><col style="width:254px"><col style="width:226px"><col style="width:337px"></colgroup>
<tbody><tr><th><span style="letter-spacing: 0.27px;">Name / Funktion</span></th><th><span style="letter-spacing: 0px;">Telefon / Fax</span></th><th><span style="letter-spacing: 0.59px;">Mobil</span></th><th><span style="letter-spacing: -0.32px;">Email</span></th><th><span style="letter-spacing: 0.29px;">Zuständig für</span></th><th><span style="letter-spacing: 0.08px;">Bemerkungen</span></th></tr>
<tr style="height:39px"><td><div class="nm"><span style="letter-spacing: 0.21px;">Herr Max Mustermann</span></div><div class="sub"><span style="letter-spacing: 0.13px;">Inhaber</span></div></td><td><svg class="ph" style="margin-right:8px;margin-left:-0.500px" width="12" height="12"><use href="#i-phone"></use></svg><a><span style="letter-spacing: -0.12px;">05971 9568832</span></a></td><td><a><span style="letter-spacing: -0.29px;">0176 57650150</span></a></td><td><a><span style="letter-spacing: 0.25px;">info@hs-solutions.de</span></a></td><td style="line-height:15px;padding-top:2px"><svg class="ph" style="margin-right:6px" width="13" height="11"><use href="#i-industry"></use></svg><span style="letter-spacing: 0.1px;">Standort 1</span><br><svg class="ph" style="margin-right:8px" width="11" height="11"><use href="#i-objcog"></use></svg><span style="letter-spacing: -0.33px;">NEA 1</span></td><td></td></tr>
<tr class="hl" style="height:39px"><td><div class="nm"><span style="letter-spacing: 0.11px;">Frau Maria Mustermann</span></div><div class="sub"><span style="letter-spacing: 0px;">Geschäftsführerin</span></div><svg class="abs" style="left:224px;top:13px" width="14" height="13"><use href="#i-star"></use></svg></td><td><svg class="ph" style="margin-right:8px;margin-left:-0.500px" width="12" height="12"><use href="#i-phone"></use></svg><a><span style="letter-spacing: -0.24px;">05971 9568831</span></a></td><td><a><span style="letter-spacing: -0.12px;">0176 97624857</span></a></td><td><a><span style="letter-spacing: 0.28px;">info@mustermann.de</span></a></td><td></td><td></td></tr>
<tr class="r3" style="height:24px"><td><div class="nm"><span style="letter-spacing: 0.25px;">Allgemein</span></div></td><td><svg class="ph" style="margin-right:8px;margin-left:-0.500px" width="12" height="12"><use href="#i-phone"></use></svg><a><span style="letter-spacing: -0.12px;">05971 9568833</span></a></td><td></td><td><a><span style="letter-spacing: 0.26px;">kontakt@mustermann.de</span></a></td><td></td><td></td></tr>
</tbody></table>
<div class="abtn" style="left:15px;width:37px;background:#0066cc;color:#fff;border-radius:4px 0 0 4px;"><svg style="left:13px;top:12px" width="11" height="11"><use href="#i-plus3"></use></svg></div>
<div class="abtn fd" style="left:52px;width:37px;background:#6699cf;color:#fff;border-left:1px solid #4f86c4;"><svg style="left:11px;top:11px" width="13" height="13"><use href="#i-pen"></use></svg></div>
<div class="abtn fd" style="left:89px;width:38px;background:#6699cf;color:#fff;border-left:1px solid #4f86c4;border-radius:0 4px 4px 0;"><svg style="left:11.500px;top:11px" width="12" height="14"><use href="#i-trash"></use></svg></div>
<div class="abtn fd" style="left:147px;width:35px;background:#6699cf;color:#fff;border-radius:4px 0 0 4px;"><svg style="left:10.0px;top:10.5px" width="15" height="15"><use href="#i-up"></use></svg></div>
<div class="abtn fd" style="left:182px;width:35px;background:#6699cf;color:#fff;border-left:1px solid #4f86c4;border-radius:0 4px 4px 0;"><svg style="left:10.0px;top:10.5px" width="15" height="15"><use href="#i-down"></use></svg></div>
<div class="abtn" style="left:237px;width:39px;background:#d6d6d6;color:#46527a;border-radius:4px;border:1px solid #cdcdcd;"><svg style="left:12px;top:10.500px" width="14" height="14"><use href="#i-plane"></use></svg></div>
<div class="rt" style="left:1455px;width:105px;background:#dcdcdc;border:1px solid #c4c4c4;border-radius:4px 0 0 4px"><span style="letter-spacing: -0.23px;">Aktivitäten</span></div>
<div class="rt" style="left:1560px;width:102px;background:#0066cc;color:#fff"><span style="letter-spacing: -0.6px;">Tickets (5)</span></div>
<div class="rt" style="left:1662px;width:135px;background:#dcdcdc;border:1px solid #c4c4c4;border-left:none;border-radius:0 4px 4px 0"><span style="letter-spacing: -0.63px;">Letzte Einsätze</span></div>
<div class="abs" style="left:1455px;top:613px;width:450px;height:400px;background:#ececec;overflow:hidden">
<div class="tk" style="top:2px;height:89px"><div class="l1"><svg width="14" height="13"><use href="#i-tags"></use></svg><a><span style="letter-spacing: -0.29px;">#507</span></a> <span style="letter-spacing: -0.22px;">Standort 1, Motor 2 "Satellit"</span></div><div class="l2"><span style="letter-spacing: 0.21px;">Objekt zur Wartung fällig - Wartung MAN: E3 - 2.000 Bh</span></div><div class="l3"><span style="letter-spacing: -0.44px;">Festgestellt am 24.09.2022</span></div><div class="l4"><span style="letter-spacing: -0.5px;">Fällig: 28.09.2022</span></div></div>
<div class="tk" style="top:94px;height:86px"><div class="l1"><svg width="14" height="13"><use href="#i-tags"></use></svg><a><span style="letter-spacing: -0.16px;">#435</span></a> <span style="letter-spacing: -0.64px;">Standort 1, BHKW 1</span></div><div class="l2" style="top:25px"><span style="letter-spacing: 0.17px;">Kunde meldet Störung vor Ort, Kabel locker</span></div><div class="l3"><span style="letter-spacing: -0.37px;">Festgestellt am 09.06.2022 von M. Schlautmann</span></div><div class="cb" style="top:45px"><svg class="abs" style="left:10.500px;top:9.500px" width="18" height="16"><use href="#i-comments"></use></svg></div></div>
<div class="tk" style="top:183px;height:86px"><div class="l1"><svg width="14" height="13"><use href="#i-tags"></use></svg><a><span style="letter-spacing: -0.79px;">#319</span></a> <span style="letter-spacing: -0.64px;">Standort 1, BHKW 1</span></div><div class="l2" style="top:25px"><span style="letter-spacing: 0.19px;">Kunde meldet Störung</span></div><div class="l3"><span style="letter-spacing: -0.5px;">Festgestellt am 04.11.2021 von M. Schlautmann</span></div><div class="cb" style="top:45px"><svg class="abs" style="left:10.500px;top:9.500px" width="18" height="16"><use href="#i-comments"></use></svg></div></div>
<div class="tk" style="top:272px;height:69px"><div class="l1"><svg width="14" height="13"><use href="#i-tags"></use></svg><a><span style="letter-spacing: -0.16px;">#256</span></a> <span style="letter-spacing: -0.38px;">Pelletheizung Rheine</span></div><div class="l2" style="top:25px"><span style="letter-spacing: 0.16px;">Filter bei nächster Wartung erneuern</span></div><div class="l3"><span style="letter-spacing: -0.44px;">Festgestellt am 30.07.2021 von M. Schlautmann</span></div></div>
<div class="tk" style="top:345px;height:89px"><div class="l1"><svg width="14" height="13"><use href="#i-tags"></use></svg><a><span style="letter-spacing: -1.15px;">#115</span></a> <span style="letter-spacing: -0.72px;">Tor 1</span></div><div class="l2"><span style="letter-spacing: 0.12px;">Software der Steuerung muss aktualisiert werden</span></div><div class="l3" style="top:47px"><span style="letter-spacing: -0.03px;">Fällig: bei nächstem Einsatz</span></div></div>
<div class="abs" style="left:433px;top:0;width:17px;height:400px;background:#f1f1f1"><div class="abs" style="left:5px;top:7px;border-left:4px solid transparent;border-right:4px solid transparent;border-bottom:4px solid #a3a3a3"></div><div class="abs" style="left:2px;top:17px;width:13px;height:321px;background:#c1c1c1"></div><div class="abs" style="left:5px;top:389px;border-left:4px solid transparent;border-right:4px solid transparent;border-top:4px solid #505050"></div></div>
</div>
</div>

<div class="abs" style="left:1920px;top:0;width:1px;height:1043px;background:#fff;z-index:50"></div>
<div class="abs" style="left:0;top:1040px;width:1920px;height:3px;background:#1c3040"></div>
<div class="abs" style="left:245px;top:1041px;width:48px;height:2px;background:#4d5c66"></div>


</body></html>
